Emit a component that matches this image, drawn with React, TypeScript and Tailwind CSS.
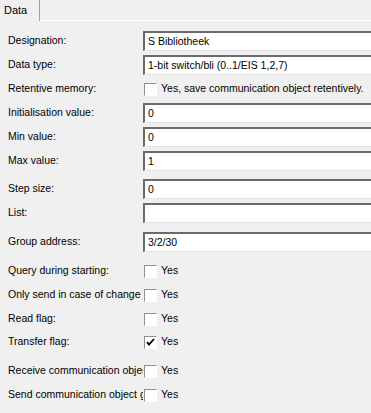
import React from "react";

type Row =
  | { kind: "input"; label: string; value: string; mt: number }
  | { kind: "check"; label: string; text: string; checked?: boolean; mt: number };

const rows: Row[] = [
  { kind: "input", label: "Designation:", value: "S Bibliotheek", mt: 10 },
  { kind: "input", label: "Data type:", value: "1-bit switch/bli (0..1/EIS 1,2,7)", mt: 4 },
  { kind: "check", label: "Retentive memory:", text: "Yes, save communication object retentively.", mt: 4 },
  { kind: "input", label: "Initialisation value:", value: "0", mt: 4 },
  { kind: "input", label: "Min value:", value: "0", mt: 4 },
  { kind: "input", label: "Max value:", value: "1", mt: 4 },
  { kind: "input", label: "Step size:", value: "0", mt: 8 },
  { kind: "input", label: "List:", value: "", mt: 4 },
  { kind: "input", label: "Group address:", value: "3/2/30", mt: 9 },
  { kind: "check", label: "Query during starting:", text: "Yes", mt: 9 },
  { kind: "check", label: "Only send in case of change", text: "Yes", mt: 4 },
  { kind: "check", label: "Read flag:", text: "Yes", mt: 4 },
  { kind: "check", label: "Transfer flag:", text: "Yes", checked: true, mt: 3 },
  { kind: "check", label: "Receive communication object", text: "Yes", mt: 9 },
  { kind: "check", label: "Send communication object group", text: "Yes", mt: 4 },
];

function CheckBox({ checked }: { checked?: boolean }) {
  return (
    <div className="w-[13px] h-[13px] shrink-0 bg-white border-t border-l border-t-[#909090] border-l-[#909090] border-b border-r border-b-white border-r-white flex items-center justify-center">
      {checked && (
        <svg width="9" height="9" viewBox="0 0 9 9">
          <path d="M1 4 L3 6.5 L8 1" fill="none" stroke="#000" strokeWidth="1.8" />
        </svg>
      )}
    </div>
  );
}

export default function App() {
  return (
    <div
      className="w-[371px] h-[413px] bg-[#f0f0f0] text-[10.5px] text-black overflow-hidden"
      style={{ fontFamily: '"Liberation Sans", Arial, sans-serif' }}
    >
      {/* Tab strip */}
      <div className="flex h-[21px]">
        <div className="w-[40px] pl-[4px] pt-[2px] text-[11px] border-r border-r-[#a0a0a0]">Data</div>
        <div className="flex-1 border-b border-b-white"></div>
      </div>

      <div className="flex flex-col pl-[8px]">
        {rows.map((r) => (
          <div key={r.label} className="flex items-center h-[20px]" style={{ marginTop: r.mt }}>
            <div className="w-[135px] shrink-0 overflow-hidden whitespace-nowrap">{r.label}</div>
            {r.kind === "input" ? (
              <div className="w-[240px] shrink-0 h-[20px] bg-white border-t-2 border-l-2 border-t-[#6a6a6a] border-l-[#6a6a6a] border-b border-b-[#e3e3e3] pl-[3px] flex items-center whitespace-nowrap">
                {r.value}
              </div>
            ) : (
              <div className="flex items-center pl-[1px]">
                <CheckBox checked={r.checked} />
                <span className="ml-[4px] whitespace-nowrap">{r.text}</span>
              </div>
            )}
          </div>
        ))}
      </div>
    </div>
  );
}
